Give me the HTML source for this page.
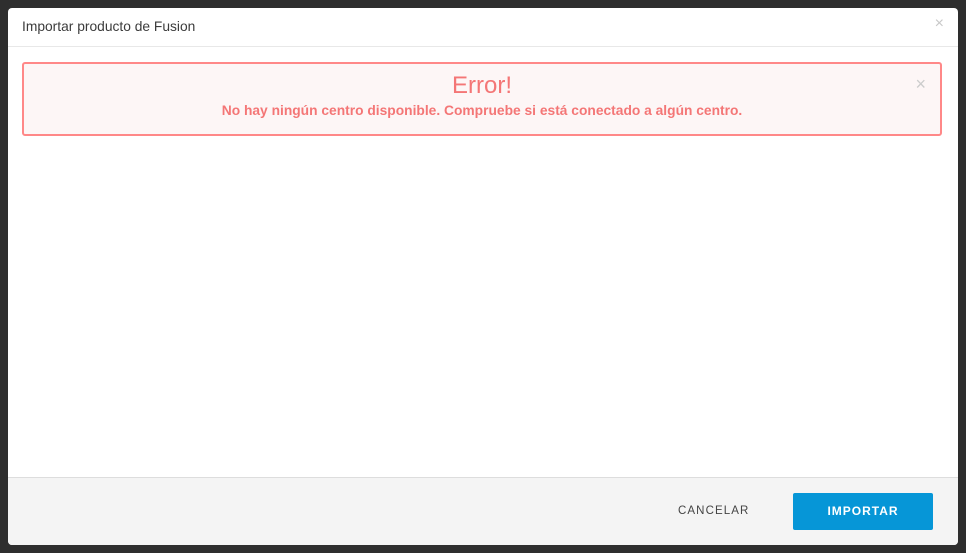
<!DOCTYPE html>
<html><head><style>
body{margin:0;width:966px;height:553px;background:#2e2e2e;position:relative;overflow:hidden;font-family:"Liberation Sans",sans-serif}
.m{position:absolute;left:8px;top:8px;width:950px;height:537px;background:#fff;border-radius:4px;overflow:hidden}
.h{height:38px;border-bottom:1px solid #e8e8e8;font-size:13.8px;color:#3c3c3c;line-height:38px;padding-left:14px}
.x{position:absolute;right:14px;top:7px;color:#c8c8c8;font-size:16px}
.a{position:absolute;left:14px;top:54px;width:916px;height:70px;border:2px solid #f88;border-radius:3px;background:#fdf6f6;text-align:center;color:#f47676}
.a .t{font-size:24px;margin-top:8px;line-height:28px}
.a .s{font-size:13.8px;font-weight:bold;margin-top:3px}
.a .c{position:absolute;right:14px;top:10px;font-size:18px;color:#ccc;font-weight:normal}
.f{position:absolute;left:0;top:469px;width:950px;height:68px;background:#f4f4f4;border-top:1px solid #ddd}
.cn{position:absolute;left:670px;top:27px;font-size:11.5px;letter-spacing:1.1px;color:#444}
.b{position:absolute;left:785px;top:15px;width:140px;height:37px;background:#0696d7;border-radius:2px;color:#fff;font-size:12px;font-weight:bold;letter-spacing:1px;text-align:center;line-height:37px}
</style></head><body>
<div class="m">
<div class="h">Importar producto de Fusion</div>
<div class="x">×</div>
<div class="a"><div class="c">×</div><div class="t">Error!</div><div class="s">No hay ningún centro disponible. Compruebe si está conectado a algún centro.</div></div>
<div class="f"><div class="cn">CANCELAR</div><div class="b">IMPORTAR</div></div>
</div>
</body></html>
